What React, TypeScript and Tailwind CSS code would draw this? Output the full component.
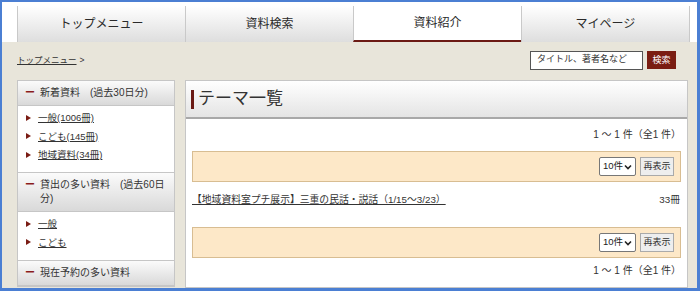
const tabs = [
  { label: 'トップメニュー', active: false },
  { label: '資料検索', active: false },
  { label: '資料紹介', active: true },
  { label: 'マイページ', active: false },
]

const sections = [
  { title: '新着資料　(過去30日分)', items: ['一般(1006冊)', 'こども(145冊)', '地域資料(34冊)'] },
  { title: '貸出の多い資料　(過去60日分)', items: ['一般', 'こども'] },
  { title: '現在予約の多い資料', items: [] as string[] },
]

const font = { fontFamily: '"Liberation Sans", "Noto Sans CJK JP", sans-serif' }

function Pager() {
  return (
    <div className="mx-[6px] h-[31px] bg-[#fde8c8] border border-[#d8bd92] flex items-center justify-end pr-[6px] gap-[4px]">
      <div className="h-[19px] w-[37px] bg-white border border-[#777] rounded-[2px] flex items-center justify-between px-[3px] text-[9.5px] text-[#222]">
        <span>10件</span>
        <svg width="8" height="6" viewBox="0 0 8 6"><path d="M1 1.5 L4 4.5 L7 1.5" stroke="#222" strokeWidth="1.6" fill="none" /></svg>
      </div>
      <button className="h-[19px] w-[34px] bg-[#eeeeee] border border-[#aaa] text-[9px] text-[#333] leading-none">再表示</button>
    </div>
  )
}

export default function App() {
  return (
    <div style={font} className="w-[700px] h-[291px] overflow-hidden border-[#4b7fd3] border-l-2 border-t-2 border-r-[3px] border-b-[3px] bg-[#e8e5da] flex flex-col">
      {/* tabs */}
      <div className="h-[40px] bg-white flex pl-[15px] pr-[7px] pt-[4px] shrink-0">
        {tabs.map((t) => (
          <div
            key={t.label}
            className={`flex-1 flex items-center justify-center text-[12px] text-[#2a2a2a] border-l border-[#c9c9c9] last:border-r ${
              t.active ? 'bg-white border-b-2 border-b-[#6b1a14]' : 'bg-gradient-to-b from-white to-[#dedede]'
            }`}
          >
            {t.label}
          </div>
        ))}
      </div>

      {/* breadcrumb + search */}
      <div className="h-[36px] flex items-center pl-[15px] pr-[19px] shrink-0">
        <a className="text-[8.5px] text-[#333] underline">トップメニュー</a>
        <span className="text-[8.5px] text-[#333] ml-[3px]">&gt;</span>
        <div className="ml-auto flex items-center gap-[4px] mr-[2px]">
          <div className="w-[113px] h-[19px] bg-white border border-[#555] text-[9px] text-[#333] flex items-center px-[6px]">タイトル、著者名など</div>
          <button className="h-[18px] w-[29px] bg-[#7a1d12] text-white text-[9px] leading-none">検索</button>
        </div>
      </div>

      <div className="flex pl-[15px] pr-[9px] gap-[10px] pt-[2px] flex-1">
        {/* sidebar */}
        <div className="w-[158px] shrink-0 flex flex-col">
          {sections.map((s) => (
            <div key={s.title} className="bg-white border border-[#c6c6c6] mb-[-1px]">
              <div className="flex items-start gap-[5px] px-[7px] py-[5px] bg-gradient-to-b from-[#fbfbfb] to-[#d9d9d9] border-b border-[#c6c6c6] text-[10px] text-[#333] leading-[14px]">
                <span className="text-[#8a1c1c] font-bold">ー</span>
                <span>{s.title}</span>
              </div>
              {s.items.length > 0 && (
                <ul className="pt-[4px] pb-[10px] pl-[8px] flex flex-col gap-[3.5px]">
                  {s.items.map((it) => (
                    <li key={it} className="flex items-center gap-[7px] text-[9.5px] text-[#333] leading-[15px]">
                      <svg width="5" height="6" viewBox="0 0 5 6"><path d="M0 0 L5 3 L0 6 Z" fill="#7a1c14" /></svg>
                      <a className="underline">{it}</a>
                    </li>
                  ))}
                </ul>
              )}
            </div>
          ))}
        </div>

        {/* main */}
        <div className="flex-1 bg-white border border-[#c6c6c6] flex flex-col">
          <div className="h-[38px] shrink-0 flex items-center pl-[5px] gap-[4px] bg-gradient-to-b from-white to-[#e4e4e4] border-b-2 border-[#a8a8a8]">
            <span className="w-[3px] h-[19px] bg-[#6b1a14]" />
            <span className="text-[17px] text-[#333]">テーマ一覧</span>
          </div>
          <div className="text-right text-[10px] text-[#333] pr-[6px] pt-[10px] pb-[10px] leading-[12px]">1 ～ 1 件（全1 件）</div>
          <Pager />
          <div className="flex items-center justify-between px-[6px] pt-[12px] pb-[21px] text-[9.8px] text-[#333] leading-[12px]">
            <a className="underline">【地域資料室プチ展示】三重の民話・説話（1/15～3/23）</a>
            <span className="pr-[1px]">33冊</span>
          </div>
          <Pager />
          <div className="text-right text-[10px] text-[#333] pr-[6px] pt-[7px] leading-[12px]">1 ～ 1 件（全1 件）</div>
        </div>
      </div>
    </div>
  )
}
